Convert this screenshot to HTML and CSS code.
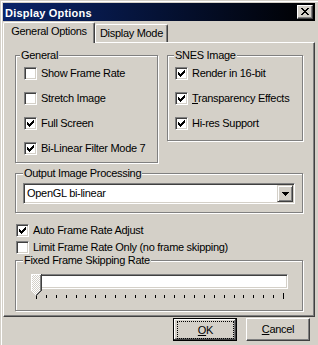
FILE: index.html
```html
<!DOCTYPE html>
<html lang="en">
<head>
    <meta charset="UTF-8">
    <meta name="viewport" content="width=device-width, initial-scale=1.0">
    <title>Display Options</title>
    <link rel="stylesheet" href="styles.css">
</head>
<body>
    <div class="window">
        <div class="titlebar">
            <span class="title">Display Options</span>
            <span class="close-btn">
                <svg width="8" height="7" viewBox="0 0 8 7" shape-rendering="crispEdges"><path d="M0 0h2v1H0zM6 0h2v1H6zM1 1h2v1H1zM5 1h2v1H5zM2 2h4v1H2zM3 3h2v1H3zM2 4h4v1H2zM1 5h2v1H1zM5 5h2v1H5zM0 6h2v1H0zM6 6h2v1H6z"/></svg>
            </span>
        </div>

        <div class="tabs">
            <div class="tab active">General Options</div>
            <div class="tab inactive">Display Mode</div>
        </div>

        <div class="panel">
            <div class="group-row">
                <fieldset class="group general">
                    <legend>General</legend>
                    <label class="check"><span class="box"></span>Show Frame Rate</label>
                    <label class="check"><span class="box"></span>Stretch Image</label>
                    <label class="check"><span class="box"><svg width="7" height="7" viewBox="0 0 7 7" shape-rendering="crispEdges"><path d="M0 2h1v3H0zM1 3h1v3H1zM2 4h1v3H2zM3 3h1v3H3zM4 2h1v3H4zM5 1h1v3H5zM6 0h1v3H6z"/></svg></span>Full Screen</label>
                    <label class="check"><span class="box"><svg width="7" height="7" viewBox="0 0 7 7" shape-rendering="crispEdges"><path d="M0 2h1v3H0zM1 3h1v3H1zM2 4h1v3H2zM3 3h1v3H3zM4 2h1v3H4zM5 1h1v3H5zM6 0h1v3H6z"/></svg></span>Bi-Linear Filter Mode 7</label>
                </fieldset>

                <fieldset class="group snes">
                    <legend>SNES Image</legend>
                    <label class="check"><span class="box"><svg width="7" height="7" viewBox="0 0 7 7" shape-rendering="crispEdges"><path d="M0 2h1v3H0zM1 3h1v3H1zM2 4h1v3H2zM3 3h1v3H3zM4 2h1v3H4zM5 1h1v3H5zM6 0h1v3H6z"/></svg></span>Render in 16-bit</label>
                    <label class="check"><span class="box"><svg width="7" height="7" viewBox="0 0 7 7" shape-rendering="crispEdges"><path d="M0 2h1v3H0zM1 3h1v3H1zM2 4h1v3H2zM3 3h1v3H3zM4 2h1v3H4zM5 1h1v3H5zM6 0h1v3H6z"/></svg></span><span><u>T</u>ransparency Effects</span></label>
                    <label class="check"><span class="box"><svg width="7" height="7" viewBox="0 0 7 7" shape-rendering="crispEdges"><path d="M0 2h1v3H0zM1 3h1v3H1zM2 4h1v3H2zM3 3h1v3H3zM4 2h1v3H4zM5 1h1v3H5zM6 0h1v3H6z"/></svg></span>Hi-res Support</label>
                </fieldset>
            </div>

            <fieldset class="group output">
                <legend>Output Image Processing</legend>
                <div class="combo">
                    <span class="combo-value">OpenGL bi-linear</span>
                    <span class="combo-btn">
                        <svg width="7" height="4" viewBox="0 0 7 4" shape-rendering="crispEdges"><path d="M0 0h7v1H0zM1 1h5v1H1zM2 2h3v1H2zM3 3h1v1H3z"/></svg>
                    </span>
                </div>
            </fieldset>

            <div class="options">
                <label class="check"><span class="box"><svg width="7" height="7" viewBox="0 0 7 7" shape-rendering="crispEdges"><path d="M0 2h1v3H0zM1 3h1v3H1zM2 4h1v3H2zM3 3h1v3H3zM4 2h1v3H4zM5 1h1v3H5zM6 0h1v3H6z"/></svg></span>Auto Frame Rate Adjust</label>
                <label class="check"><span class="box"></span>Limit Frame Rate Only (no frame skipping)</label>
            </div>

            <fieldset class="group fixed">
                <legend>Fixed Frame Skipping Rate</legend>
                <div class="trackbar">
                    <div class="channel"></div>
                    <svg class="ticks" width="256" height="11" viewBox="0 0 256 11" shape-rendering="crispEdges">
                        <path d="M4 4h1v6H4zM251 4h1v6h-1zM14 6h1v3h-1zM24 6h1v3h-1zM34 6h1v3h-1zM44 6h1v3h-1zM53 6h1v3h-1zM63 6h1v3h-1zM73 6h1v3h-1zM83 6h1v3h-1zM93 6h1v3h-1zM103 6h1v3h-1zM113 6h1v3h-1zM123 6h1v3h-1zM132 6h1v3h-1zM142 6h1v3h-1zM152 6h1v3h-1zM162 6h1v3h-1zM172 6h1v3h-1zM182 6h1v3h-1zM192 6h1v3h-1zM202 6h1v3h-1zM211 6h1v3h-1zM221 6h1v3h-1zM231 6h1v3h-1zM241 6h1v3h-1z"/>
                    </svg>
                    <svg class="thumb" width="11" height="22" viewBox="0 0 11 22" shape-rendering="crispEdges">
                        <defs>
                            <pattern id="dither" width="2" height="2" patternUnits="userSpaceOnUse">
                                <rect width="2" height="2" fill="#d4d0c8"/>
                                <rect width="1" height="1" fill="#fff"/>
                                <rect x="1" y="1" width="1" height="1" fill="#fff"/>
                            </pattern>
                        </defs>
                        <path fill="url(#dither)" d="M0 0h11v17l-5 5h-1l-5-5z"/>
                        <path fill="#fff" d="M0 0h10v1H1v16H0zM1 17h1v1H1zM2 18h1v1H2zM3 19h1v1H3zM4 20h1v1H4z"/>
                        <path fill="#808080" d="M9 1h1v16H9zM8 17h1v1H8zM7 18h1v1H7zM6 19h1v1H6zM5 20h1v1H5z"/>
                        <path fill="#404040" d="M10 0h1v17h-1zM9 17h1v1H9zM8 18h1v1H8zM7 19h1v1H7zM6 20h1v1H6zM5 21h1v1H5z"/>
                    </svg>
                </div>
            </fieldset>
        </div>

        <div class="buttons">
            <button class="btn default"><span class="focus"><u>O</u>K</span></button>
            <button class="btn"><u>C</u>ancel</button>
        </div>
    </div>
</body>
</html>
```

FILE: styles.css
```css
* {
    box-sizing: border-box;
}
body {
    margin: 0;
    background: #d4d0c8;
    font-family: "Liberation Sans", Arial, sans-serif;
    font-size: 11px;
    letter-spacing: -0.3px;
    color: #000;
}
.window {
    width: 318px;
    height: 345px;
    padding: 3px 3px 0;
    overflow: hidden;
    background: #d4d0c8;
    box-shadow: inset 1px 1px 0 #d4d0c8, inset 2px 2px 0 #fff;
}

/* title bar */
.titlebar {
    display: flex;
    align-items: center;
    justify-content: space-between;
    height: 18px;
    padding: 0 2px;
    background: linear-gradient(to right, #0a246a, #000);
    color: #fff;
}
.title {
    padding-top: 2px;
    line-height: 14px;
    font-weight: bold;
    letter-spacing: 0.2px;
}
.close-btn {
    width: 16px;
    height: 14px;
    border: 1px solid;
    border-color: #fff #404040 #404040 #fff;
    box-shadow: inset -1px -1px 0 #808080;
    background: #d4d0c8;
}
.close-btn svg {
    display: block;
    margin: 2px 0 0 3px;
}

/* tabs */
.tabs {
    display: flex;
    align-items: flex-end;
    height: 21px;
}
.tab {
    height: 18px;
    padding-top: 2px;
    line-height: 13px;
    text-align: center;
    white-space: nowrap;
    border: 1px solid #fff;
    border-right-color: #404040;
    border-bottom: 0;
    border-radius: 2px 2px 0 0;
    box-shadow: inset -1px 0 0 #808080;
}
.tab.active {
    position: relative;
    z-index: 1;
    width: 92px;
    height: 21px;
    margin-bottom: -1px;
    background: #d4d0c8;
}
.tab.inactive {
    width: 73px;
}
.panel {
    height: 275px;
    padding: 6px 11px 0;
    border: 1px solid #fff;
    border-right-color: #404040;
    border-bottom-color: #404040;
    box-shadow: inset -1px -1px 0 #808080;
}

/* group boxes */
.group-row {
    display: grid;
    grid-template-columns: 143px 136px;
    gap: 9px;
    align-items: start;
}
.group {
    min-width: 0;
    margin: 0;
    padding: 0;
    border: 1px solid #808080;
    box-shadow: 1px 1px 0 #fff, inset 1px 1px 0 #fff;
}
.group legend {
    padding: 0 1px;
    line-height: 13px;
    background: #d4d0c8;
}
.general {
    padding: 5px 0 7px 8px;
}
.general legend {
    margin-left: -4px;
}
.snes {
    padding: 5px 0 10px 7px;
}
.snes legend {
    margin-left: -1px;
}
.output {
    margin-top: 4px;
    padding: 3px 7px 8px;
}
.fixed {
    padding: 4px 14px 7px 16px;
}
.fixed legend {
    margin-left: -9px;
}

/* checkboxes */
.check {
    display: flex;
    gap: 4px;
    height: 13px;
    line-height: 13px;
    white-space: nowrap;
}
.check + .check {
    margin-top: 12px;
}
.box {
    flex: none;
    width: 13px;
    height: 13px;
    border: 1px solid;
    border-color: #808080 #fff #fff #808080;
    box-shadow: inset 1px 1px 0 #404040, inset -1px -1px 0 #d4d0c8;
    background: #fff;
}
.box svg {
    display: block;
    margin: 2px 0 0 2px;
}
.options {
    margin: 11px 0 0 1px;
}
.options .check + .check {
    margin-top: 4px;
}

/* combo box */
.combo {
    display: flex;
    height: 21px;
    padding: 1px;
    border: 1px solid;
    border-color: #808080 #fff #fff #808080;
    box-shadow: inset 1px 1px 0 #404040, inset -1px -1px 0 #d4d0c8;
    background: #fff;
}
.combo-value {
    flex: 1;
    padding-left: 2px;
    line-height: 17px;
}
.combo-btn {
    display: flex;
    align-items: center;
    justify-content: center;
    width: 16px;
    border: 1px solid;
    border-color: #d4d0c8 #404040 #404040 #d4d0c8;
    box-shadow: inset 1px 1px 0 #fff, inset -1px -1px 0 #808080;
    background: #d4d0c8;
}
.combo-btn svg {
    display: block;
}

/* trackbar */
.trackbar {
    position: relative;
    height: 29px;
}
.channel {
    height: 15px;
    margin-top: 3px;
    border: 1px solid;
    border-color: #808080 #fff #fff #808080;
    box-shadow: inset 1px 1px 0 #404040, inset -1px -1px 0 #d4d0c8;
    background: #fff;
}
.ticks {
    display: block;
}
.thumb {
    position: absolute;
    left: -1px;
    top: 0;
}

/* buttons */
.buttons {
    display: flex;
    justify-content: flex-end;
    gap: 9px;
    margin-top: 1px;
    padding-right: 5px;
}
.btn {
    width: 64px;
    height: 23px;
    padding: 0;
    font: inherit;
    letter-spacing: inherit;
    line-height: 13px;
    color: #000;
    background: #d4d0c8;
    border: 1px solid;
    border-color: #fff #404040 #404040 #fff;
    box-shadow: inset -1px -1px 0 #808080;
}
.btn.default {
    padding: 2px 2px 1px 3px;
    border-color: #000;
    box-shadow: inset -1px -1px 0 #404040, inset 1px 1px 0 #fff, inset -2px -2px 0 #808080;
}
.focus {
    display: flex;
    align-items: center;
    justify-content: center;
    height: 100%;
    border: 1px dotted #000;
}
```
